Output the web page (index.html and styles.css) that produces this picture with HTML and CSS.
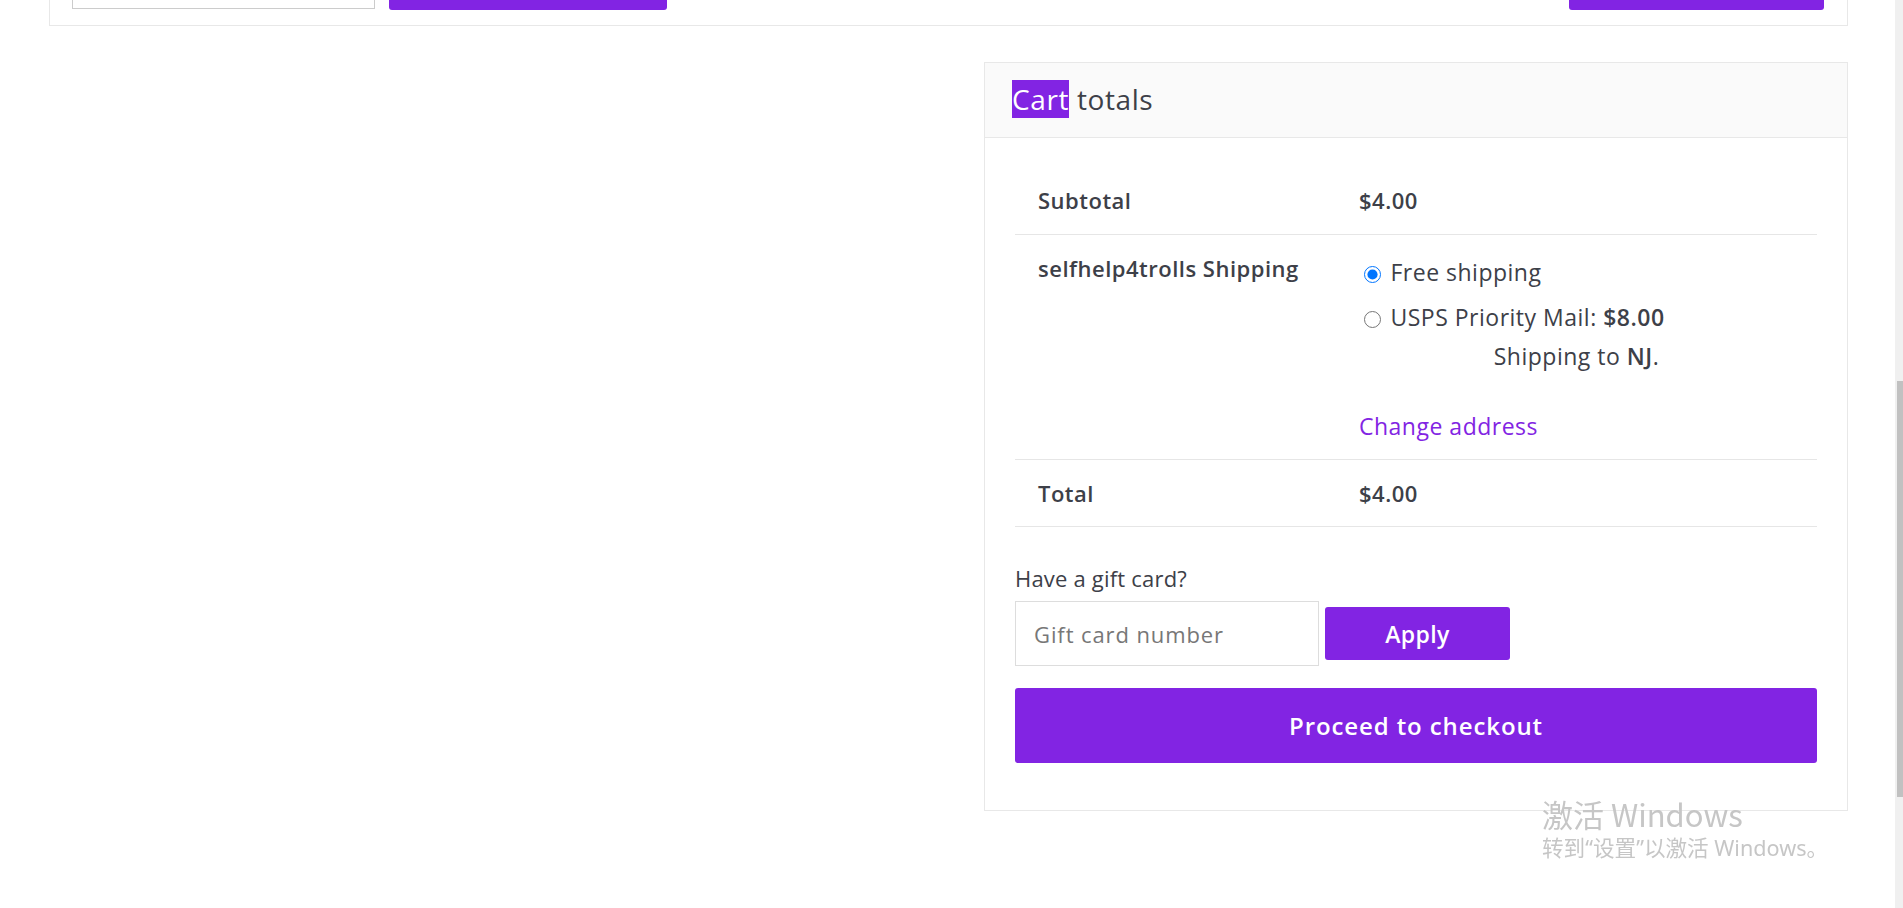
FILE: index.html
```html
<!DOCTYPE html>
<html lang="en">
<head>
<meta charset="utf-8">
<title>Cart</title>
<link rel="stylesheet" href="styles.css">
</head>
<body>
<div class="window">
  <main class="page">
    <form class="cart-form">
      <div class="cart-actions">
        <div class="coupon">
          <input class="coupon-input" type="text" aria-label="Coupon code">
          <button class="btn btn-coupon" type="button" aria-label="Apply coupon"></button>
        </div>
        <button class="btn btn-update" type="button" aria-label="Update cart"></button>
      </div>
    </form>

    <div class="collaterals">
      <section class="cart-totals">
        <h2 class="totals-title"><span class="hl">Cart</span> totals</h2>
        <div class="totals-body">
          <div class="totals-table">
            <div class="row">
              <div class="label">Subtotal</div>
              <div class="value strong">$4.00</div>
            </div>
            <div class="row">
              <div class="label">selfhelp4trolls Shipping</div>
              <div class="value">
                <ul class="methods">
                  <li><input class="radio" type="radio" name="ship" checked> Free shipping</li>
                  <li><input class="radio" type="radio" name="ship"> USPS Priority Mail: <b>$8.00</b></li>
                </ul>
                <p class="destination">Shipping to <b>NJ</b>.</p>
                <p class="change"><a href="#" class="change-link">Change address</a></p>
              </div>
            </div>
            <div class="row">
              <div class="label">Total</div>
              <div class="value strong">$4.00</div>
            </div>
          </div>

          <div class="gift">
            <p class="gift-label">Have a gift card?</p>
            <div class="gift-form">
              <input class="gift-input" type="text" placeholder="Gift card number">
              <button class="btn btn-apply" type="button">Apply</button>
            </div>
          </div>

          <button class="btn btn-checkout" type="button">Proceed to checkout</button>
        </div>
      </section>
    </div>
  </main>

  <div class="scrollbar"><div class="thumb"></div></div>
</div>

<div class="watermark">
  <div class="wm-title">激活 Windows</div>
  <div class="wm-sub">转到“设置”以激活 Windows。</div>
</div>
</body>
</html>
```

FILE: styles.css
```css
html, body {
  margin: 0;
  padding: 0;
  background: #ffffff;
}

body {
  font-family: "Open Sans", "Liberation Sans", sans-serif;
  color: #3d4048;
  font-size: 23px;
  line-height: 33px;
  letter-spacing: 0.5px;
}

.window {
  display: flex;
  height: 908px;
  overflow: hidden;
}

.page {
  flex: 1;
  padding: 0 47px 0 49px;
}

/* top, cut-off cart form */
.cart-form {
  border: 1px solid #e8e8e8;
  border-top: none;
  height: 26px;
  box-sizing: border-box;
  overflow: hidden;
}

.cart-actions {
  display: flex;
  justify-content: space-between;
  align-items: flex-end;
  height: 25px;
  padding: 0 23px 15px 22px;
  box-sizing: border-box;
}

.coupon {
  display: flex;
  align-items: flex-end;
  gap: 14px;
}

.coupon-input {
  width: 303px;
  height: 50px;
  box-sizing: border-box;
  border: 1px solid #cccccc;
  margin: 0 0 1px;
  padding: 0;
}

.btn {
  font-family: inherit;
  letter-spacing: 0.4px;
  border: none;
  background: #8224e3;
  color: #ffffff;
  border-radius: 3px;
  cursor: pointer;
}

.btn-coupon {
  width: 278px;
  height: 50px;
}

.btn-update {
  width: 255px;
  height: 50px;
}

/* totals */
.collaterals {
  display: flex;
  justify-content: flex-end;
  margin-top: 36px;
}

.cart-totals {
  width: 864px;
  box-sizing: border-box;
  border: 1px solid #e8e8e8;
}

.totals-title {
  margin: 0;
  font-size: 28px;
  font-weight: 400;
  line-height: 35px;
  letter-spacing: 0.6px;
  padding: 19px 27px 20px;
  background: #fafafa;
  border-bottom: 1px solid #e8e8e8;
  color: #3d4048;
}

.hl {
  background: #8224e3;
  color: #ffffff;
}

.totals-body {
  padding: 29px 30px 47px;
}

.totals-table {
  display: flex;
  flex-direction: column;
}

.row {
  display: flex;
  border-bottom: 1px solid #e6e6e6;
  padding: 17px 0 16px;
}

.row:first-child {
  padding-bottom: 17px;
}

.label {
  width: 344px;
  box-sizing: border-box;
  padding-left: 23px;
  font-weight: 600;
  font-size: 22px;
  letter-spacing: 0.5px;
}

.value {
  flex: 1;
  padding-right: 23px;
}

.strong {
  font-weight: 600;
  font-size: 22px;
}

.methods {
  list-style: none;
  margin: 4px 0 0;
  padding: 0;
}

.methods li + li {
  margin-top: 12px;
}

.methods b,
.destination b {
  font-weight: 600;
}

.radio {
  width: 17px;
  height: 17px;
  margin: 0 3px 0 5px;
  vertical-align: -2px;
  accent-color: #0075ff;
}

.destination {
  margin: 6px 0 0;
  text-align: center;
}

.change {
  margin: 37px 0 0;
}

.change-link {
  color: #8224e3;
  text-decoration: none;
}

/* gift card */
.gift {
  margin-top: 35px;
}

.gift-label {
  margin: 0 0 6px;
  font-size: 22px;
  letter-spacing: 0.2px;
}

.gift-form {
  display: flex;
  align-items: center;
  gap: 6px;
}

.gift-input {
  width: 304px;
  height: 65px;
  box-sizing: border-box;
  border: 1px solid #dddddd;
  padding: 0 18px;
  font-family: inherit;
  font-size: 22px;
  letter-spacing: 0.9px;
  color: #3d4048;
  margin: 0;
}

.gift-input::placeholder {
  color: #777777;
}

.btn-apply {
  width: 185px;
  height: 53px;
  font-size: 23px;
  font-weight: 600;
}

.btn-checkout {
  display: block;
  width: 100%;
  height: 75px;
  margin-top: 22px;
  font-size: 24px;
  font-weight: 600;
  letter-spacing: 0.9px;
}

/* scrollbar */
.scrollbar {
  width: 8px;
  flex: none;
  background: #f0f0f0;
  position: relative;
}

.thumb {
  position: absolute;
  left: 2px;
  right: 0;
  top: 381px;
  height: 416px;
  background: #c1c1c1;
}

/* OS watermark overlay */
.watermark {
  position: fixed;
  left: 1542px;
  top: 795px;
  color: #c6c6c6;
  pointer-events: none;
  letter-spacing: 0;
}

.wm-title {
  font-family: "Noto Sans CJK SC", "Noto Sans", sans-serif;
  font-size: 31px;
  line-height: 37px;
}

.wm-sub {
  font-family: "Noto Sans", "Noto Sans CJK SC", sans-serif;
  font-size: 21.6px;
  line-height: 26px;
  margin-top: 3px;
}
```
